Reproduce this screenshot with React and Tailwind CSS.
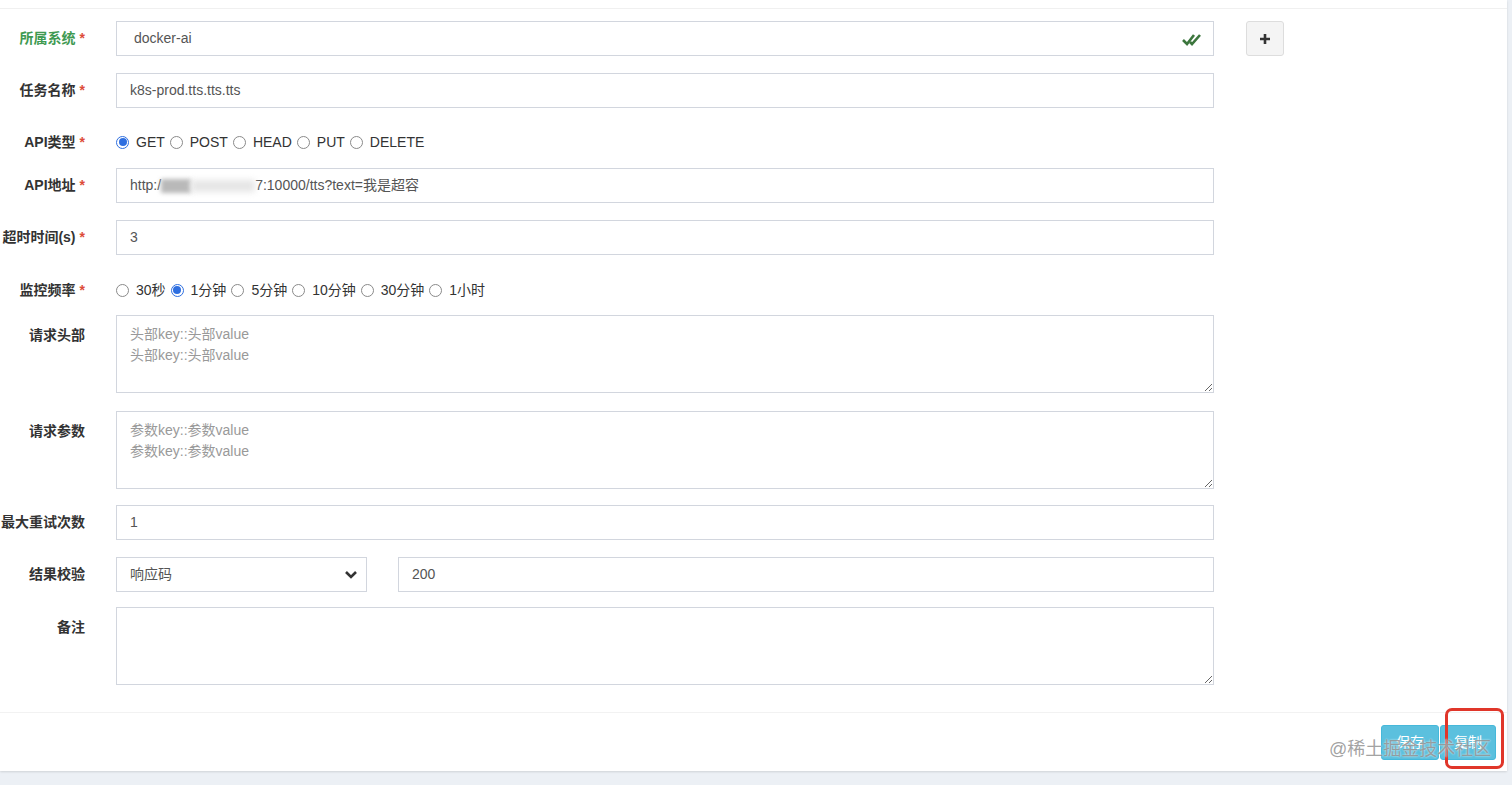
import React from "react";

const font = { fontFamily: '"Liberation Sans", "Noto Sans CJK SC", sans-serif' };

function Star() {
  return <span className="ml-[4px] text-[#dd4b39]">*</span>;
}

function Label({ children, required, green, top }) {
  return (
    <div
      className={`flex w-[85px] shrink-0 justify-end whitespace-nowrap text-[14px] font-bold ${
        green ? "text-[#3f9a52]" : "text-[#333]"
      } ${top ? "items-start pt-[10px]" : "items-center"}`}
    >
      {children}
      {required && <Star />}
    </div>
  );
}

function Field({ children, className = "" }) {
  return (
    <div
      className={`flex h-[35px] items-center border border-[#d2d6de] bg-white px-[13px] text-[14px] text-[#555] ${className}`}
    >
      {children}
    </div>
  );
}

function Radio({ checked }) {
  return (
    <span
      className={`flex h-[13px] w-[13px] shrink-0 items-center justify-center rounded-full border ${
        checked ? "border-[#2f6fe0] bg-white" : "border-[#8a8a8a] bg-white"
      }`}
    >
      {checked && <span className="h-[8px] w-[8px] rounded-full bg-[#2f6fe0]" />}
    </span>
  );
}

function RadioGroup({ items, selected }) {
  return (
    <div className="flex items-center text-[14px] text-[#333]">
      {items.map((it, i) => (
        <div key={it} className="mr-[5px] flex items-center">
          <Radio checked={i === selected} />
          <span className="ml-[7px]">{it}</span>
        </div>
      ))}
    </div>
  );
}

function Area({ placeholder, className = "" }) {
  return (
    <textarea
      readOnly
      placeholder={placeholder}
      className={`h-[78px] w-[1098px] resize-y border border-[#d2d6de] bg-white px-[13px] pt-[8px] text-[14px] leading-[21px] text-[#555] outline-none placeholder:text-[#999] ${className}`}
      style={font}
    />
  );
}

function Row({ children, className = "" }) {
  return <div className={`flex gap-[31px] ${className}`}>{children}</div>;
}

export default function App() {
  return (
    <div className="relative h-[785px] w-[1512px] overflow-hidden bg-[#ecf0f5]" style={font}>
      <div className="w-[1507px] bg-white shadow-[0_1px_2px_rgba(0,0,0,0.12)]">
        <div className="h-[9px] border-b border-[#f0f0f0]" />
        <div className="flex flex-col overflow-hidden pb-[27px]">
          <Row className="mt-[12px]">
            <Label required green>所属系统</Label>
            <div className="flex items-center">
              <Field className="w-[1098px] justify-between border-[#3f9a52] pl-[17px] text-[#333]">
                <span>docker-ai</span>
                <svg width="20" height="14" viewBox="0 0 20 14" className="mr-[-2px]">
                  <path d="M1 8 L5 12 L12 3" fill="none" stroke="#3c763d" strokeWidth="2.6" />
                  <path d="M8 10 L10 12 L18 3" fill="none" stroke="#3c763d" strokeWidth="2.6" />
                </svg>
              </Field>
              <button className="ml-[32px] flex h-[35px] w-[38px] items-center justify-center rounded-[3px] border border-[#ddd] bg-[#f4f4f4]">
                <svg width="12" height="12" viewBox="0 0 12 12">
                  <path d="M6 1 V11 M1 6 H11" stroke="#333" strokeWidth="2.6" />
                </svg>
              </button>
            </div>
          </Row>

          <Row className="mt-[17px]">
            <Label required>任务名称</Label>
            <Field className="w-[1098px]">k8s-prod.tts.tts.tts</Field>
          </Row>

          <Row className="mt-[24px] h-[20px]">
            <Label required>API类型</Label>
            <RadioGroup items={["GET", "POST", "HEAD", "PUT", "DELETE"]} selected={0} />
          </Row>

          <Row className="mt-[16px]">
            <Label required>API地址</Label>
            <Field className="w-[1098px]">
              <span>http:/</span>
              <span className="h-[14px] w-[30px] bg-[#b9b9b9] blur-[2px]" />
              <span className="h-[12px] w-[64px] bg-[#e6e6e6] blur-[3px]" />
              <span>7:10000/tts?text=我是超容</span>
            </Field>
          </Row>

          <Row className="mt-[17px]">
            <Label required>超时时间(s)</Label>
            <Field className="w-[1098px]">3</Field>
          </Row>

          <Row className="mt-[25px] h-[20px]">
            <Label required>监控频率</Label>
            <RadioGroup items={["30秒", "1分钟", "5分钟", "10分钟", "30分钟", "1小时"]} selected={1} />
          </Row>

          <Row className="mt-[15px]">
            <Label top>请求头部</Label>
            <Area placeholder={"头部key::头部value\n头部key::头部value"} />
          </Row>

          <Row className="mt-[18px]">
            <Label top>请求参数</Label>
            <Area placeholder={"参数key::参数value\n参数key::参数value"} />
          </Row>

          <Row className="mt-[16px]">
            <Label>最大重试次数</Label>
            <Field className="h-[34px] w-[1098px]">1</Field>
          </Row>

          <Row className="mt-[17px]">
            <Label>结果校验</Label>
            <div className="flex gap-[31px]">
              <Field className="h-[34px] w-[251px] justify-between pr-[8px] text-[#333]">
                <span>响应码</span>
                <svg width="14" height="10" viewBox="0 0 14 10">
                  <path d="M2 2 L7 7 L12 2" fill="none" stroke="#333" strokeWidth="2.6" />
                </svg>
              </Field>
              <Field className="h-[34px] w-[816px]">200</Field>
            </div>
          </Row>

          <Row className="mt-[15px]">
            <Label top>备注</Label>
            <Area placeholder="" />
          </Row>
        </div>

        <div className="flex h-[59px] items-start justify-end border-t border-[#f2f2f2] pr-[11px] pt-[12px]">
          <button className="h-[35px] w-[58px] rounded-[3px] border border-[#46b8da] bg-[#5bc0de] text-[14px] text-white">
            保存
          </button>
          <button className="ml-[1px] h-[35px] w-[56px] rounded-[3px] border border-[#46b8da] bg-[#5bc0de] text-[14px] text-white">
            复制
          </button>
        </div>
      </div>

      <div className="pointer-events-none absolute left-[1445px] top-[708px] h-[61px] w-[59px] rounded-[7px] border-[3px] border-[#e0362a]" />
      <div
        className="pointer-events-none absolute left-[1329px] top-[736px] text-[18px] text-[#8a8a8a]/80"
        style={{ textShadow: "0 0 2px rgba(255,255,255,0.9)" }}
      >
        @稀土掘金技术社区
      </div>
    </div>
  );
}
